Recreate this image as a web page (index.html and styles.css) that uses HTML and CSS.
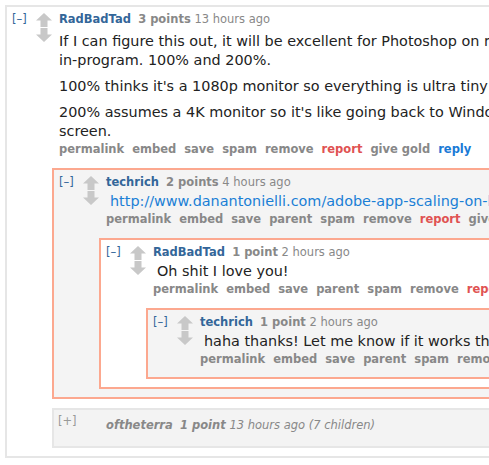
FILE: index.html
```html
<!DOCTYPE html>
<html>
<head>
<meta charset="utf-8">
<link rel="stylesheet" href="styles.css">
</head>
<body>
<div class="thread">
  <div class="comment top">
    <div class="row">
      <span class="toggle">[–]</span>
      <div class="arrows">
        <svg width="16" height="14" viewBox="0 0 16 14"><polygon points="8,0 16,7.5 11.5,7.5 11.5,14 4.5,14 4.5,7.5 0,7.5"/></svg>
        <svg width="16" height="14" viewBox="0 0 16 14"><polygon points="4.5,0 11.5,0 11.5,6.5 16,6.5 8,14 0,6.5 4.5,6.5"/></svg>
      </div>
      <div class="entry">
        <p class="tagline"><a class="author">RadBadTad</a> <span class="score">3 points</span> <span>13 hours ago</span></p>
        <div class="md md-first">
          <p>If I can figure this out, it will be excellent for Photoshop on my<br>in-program. 100% and 200%.</p>
          <p>100% thinks it's a 1080p monitor so everything is ultra tiny and</p>
          <p>200% assumes a 4K monitor so it's like going back to Windows<br>screen.</p>
        </div>
        <ul class="buttons">
          <li><a>permalink</a></li><li><a>embed</a></li><li><a>save</a></li><li><a>spam</a></li><li><a>remove</a></li><li><a class="red">report</a></li><li><a>give gold</a></li><li><a class="blue">reply</a></li>
        </ul>
      </div>
    </div>
    <div class="child">
      <div class="comment alt">
        <div class="row">
          <span class="toggle">[–]</span>
          <div class="arrows">
            <svg width="16" height="14" viewBox="0 0 16 14"><polygon points="8,0 16,7.5 11.5,7.5 11.5,14 4.5,14 4.5,7.5 0,7.5"/></svg>
            <svg width="16" height="14" viewBox="0 0 16 14"><polygon points="4.5,0 11.5,0 11.5,6.5 16,6.5 8,14 0,6.5 4.5,6.5"/></svg>
          </div>
          <div class="entry">
            <p class="tagline"><a class="author">techrich</a> <span class="score">2 points</span> <span>4 hours ago</span></p>
            <div class="md">
              <p><a class="link">http://www.danantonielli.com/adobe-app-scaling-on-high-dpi-displays-fix/</a></p>
            </div>
            <ul class="buttons">
              <li><a>permalink</a></li><li><a>embed</a></li><li><a>save</a></li><li><a>parent</a></li><li><a>spam</a></li><li><a>remove</a></li><li><a class="red">report</a></li><li><a>give gold</a></li><li><a class="blue">reply</a></li>
            </ul>
          </div>
        </div>
        <div class="child">
          <div class="comment">
            <div class="row">
              <span class="toggle">[–]</span>
              <div class="arrows">
                <svg width="16" height="14" viewBox="0 0 16 14"><polygon points="8,0 16,7.5 11.5,7.5 11.5,14 4.5,14 4.5,7.5 0,7.5"/></svg>
                <svg width="16" height="14" viewBox="0 0 16 14"><polygon points="4.5,0 11.5,0 11.5,6.5 16,6.5 8,14 0,6.5 4.5,6.5"/></svg>
              </div>
              <div class="entry">
                <p class="tagline"><a class="author">RadBadTad</a> <span class="score">1 point</span> <span>2 hours ago</span></p>
                <div class="md">
                  <p>Oh shit I love you!</p>
                </div>
                <ul class="buttons">
                  <li><a>permalink</a></li><li><a>embed</a></li><li><a>save</a></li><li><a>parent</a></li><li><a>spam</a></li><li><a>remove</a></li><li><a class="red">report</a></li><li><a>give gold</a></li><li><a class="blue">reply</a></li>
                </ul>
              </div>
            </div>
            <div class="child">
              <div class="comment alt">
                <div class="row">
                  <span class="toggle">[–]</span>
                  <div class="arrows">
                    <svg width="16" height="14" viewBox="0 0 16 14"><polygon points="8,0 16,7.5 11.5,7.5 11.5,14 4.5,14 4.5,7.5 0,7.5"/></svg>
                    <svg width="16" height="14" viewBox="0 0 16 14"><polygon points="4.5,0 11.5,0 11.5,6.5 16,6.5 8,14 0,6.5 4.5,6.5"/></svg>
                  </div>
                  <div class="entry">
                    <p class="tagline"><a class="author">techrich</a> <span class="score">1 point</span> <span>2 hours ago</span></p>
                    <div class="md">
                      <p>haha thanks! Let me know if it works though</p>
                    </div>
                    <ul class="buttons">
                      <li><a>permalink</a></li><li><a>embed</a></li><li><a>save</a></li><li><a>parent</a></li><li><a>spam</a></li><li><a>remove</a></li><li><a class="red">report</a></li><li><a>give gold</a></li><li><a class="blue">reply</a></li>
                    </ul>
                  </div>
                </div>
              </div>
            </div>
          </div>
        </div>
      </div>
      <div class="collapsed">
        <span class="toggle">[+]</span>
        <p class="tagline"><a class="author">oftheterra</a> <span class="score">1 point</span> <span>13 hours ago (7 children)</span></p>
      </div>
    </div>
  </div>
</div>
</body>
</html>
```

FILE: styles.css
```css
html, body {
  margin: 0;
  padding: 0;
  overflow: hidden;
  background: #fff;
}
body {
  font-family: "DejaVu Sans", Verdana, sans-serif;
  color: #222;
}
.thread {
  width: 900px;
  margin: 5px 0 0 5px;
}
.comment {
  border: 2px solid #fca88f;
  padding: 5px 0 8px 5px;
  background: #fff;
}
.comment.top {
  border-color: #e6e6e6;
}
.comment.alt {
  background: #f4f4f4;
}
.row {
  display: flex;
  align-items: flex-start;
}
.toggle {
  flex: none;
  width: 24px;
  font-size: 11.5px;
  line-height: 14px;
  color: #369;
}
.arrows {
  flex: none;
  width: 16px;
  margin: 1px 7px 0 0;
  display: flex;
  flex-direction: column;
  gap: 1px;
}
.arrows svg {
  display: block;
  fill: #c8c8c8;
}
.entry {
  flex: 1;
  min-width: 0;
}
.tagline {
  margin: 0;
  font-size: 11.5px;
  line-height: 14px;
  color: #888;
  white-space: nowrap;
}
.author {
  color: #369;
  font-weight: bold;
  margin-right: 3.5px;
}
.score {
  font-weight: bold;
}
.md {
  font-size: 14.4px;
  line-height: 19px;
  margin: 3px 0 0 4px;
  white-space: nowrap;
}
.md-first {
  margin: 6px 0 0 0;
}
.md p {
  margin: 0 0 7px;
}
.md p:last-child {
  margin-bottom: 0;
}
.link {
  color: #1a7fd6;
}
.buttons {
  list-style: none;
  margin: 1px 0 3px;
  padding: 0;
  display: flex;
  gap: 8px;
  font-size: 11.5px;
  line-height: 14px;
  font-weight: bold;
  white-space: nowrap;
}
.buttons a {
  color: #888;
}
.buttons a.red {
  color: #e05252;
}
.buttons a.blue {
  color: #1a7ad6;
}
.child {
  margin: 9px 0 0 40px;
}
.collapsed {
  margin-top: 9px;
  border: 2px solid #e6e6e6;
  background: #f3f3f3;
  padding: 4px 0 14px 4px;
  display: flex;
  align-items: flex-start;
}
.collapsed .toggle {
  width: 48px;
  color: #999;
}
.collapsed .tagline {
  margin-top: 3.5px;
  font-style: italic;
}
.collapsed .author {
  color: #888;
}
```
